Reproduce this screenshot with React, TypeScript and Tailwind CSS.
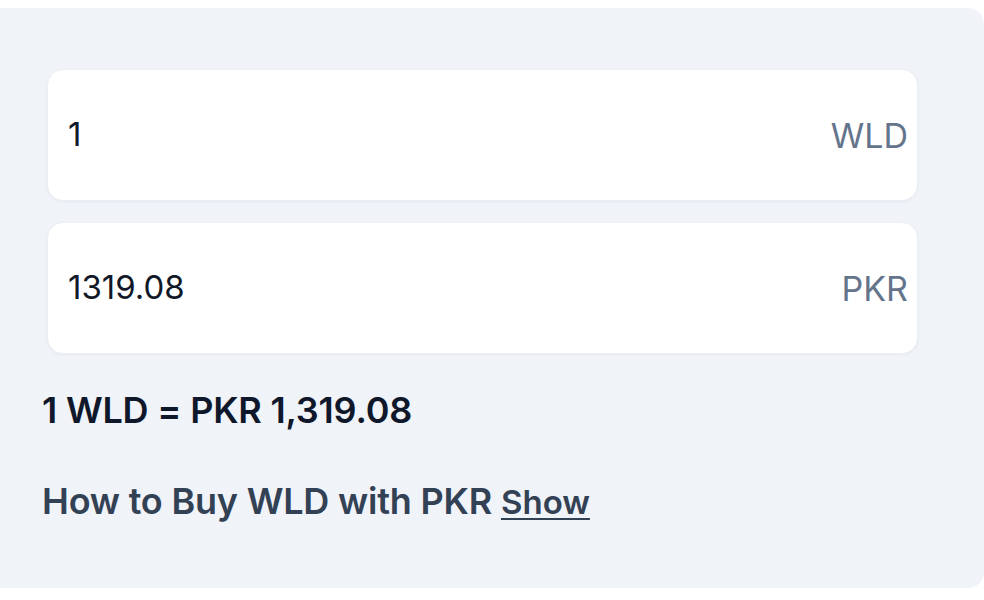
export default function App() {
  return (
    <div className="min-h-[600px] bg-white pt-2" style={{ fontFamily: 'Inter, "Noto Sans", sans-serif' }}>
      <div className="h-[580px] rounded-r-2xl bg-[#f0f3f8] pl-[42px] pr-[66px] pt-[61px]">
        <div className="ml-[5px] flex flex-col gap-[21px]">
          <AmountField value="1" unit="WLD" />
          <AmountField value="1319.08" unit="PKR" />
        </div>
        <p className="mt-[36px] text-[36px] font-semibold leading-[40px] tracking-[-0.2px] text-[#0f172a]">
          1 WLD = PKR 1,319.08
        </p>
        <p className="mt-[51px] flex items-baseline gap-[9px] leading-[40px] text-[#334155]">
          <span className="text-[36px] font-semibold tracking-[-0.2px]">How to Buy WLD with PKR</span>
          <span className="text-[33px] font-semibold underline decoration-2 underline-offset-4">Show</span>
        </p>
      </div>
    </div>
  )
}

function AmountField({ value, unit }: { value: string; unit: string }) {
  return (
    <div className="flex h-[132px] items-center justify-between rounded-2xl border border-[#eceff3] bg-white pl-[20px] pr-[9px] shadow-[0_1px_3px_rgba(15,23,42,0.05)]">
      <span className="text-[33px] text-[#111827]">{value}</span>
      <span className="text-[34px] text-[#64748b]">{unit}</span>
    </div>
  )
}
